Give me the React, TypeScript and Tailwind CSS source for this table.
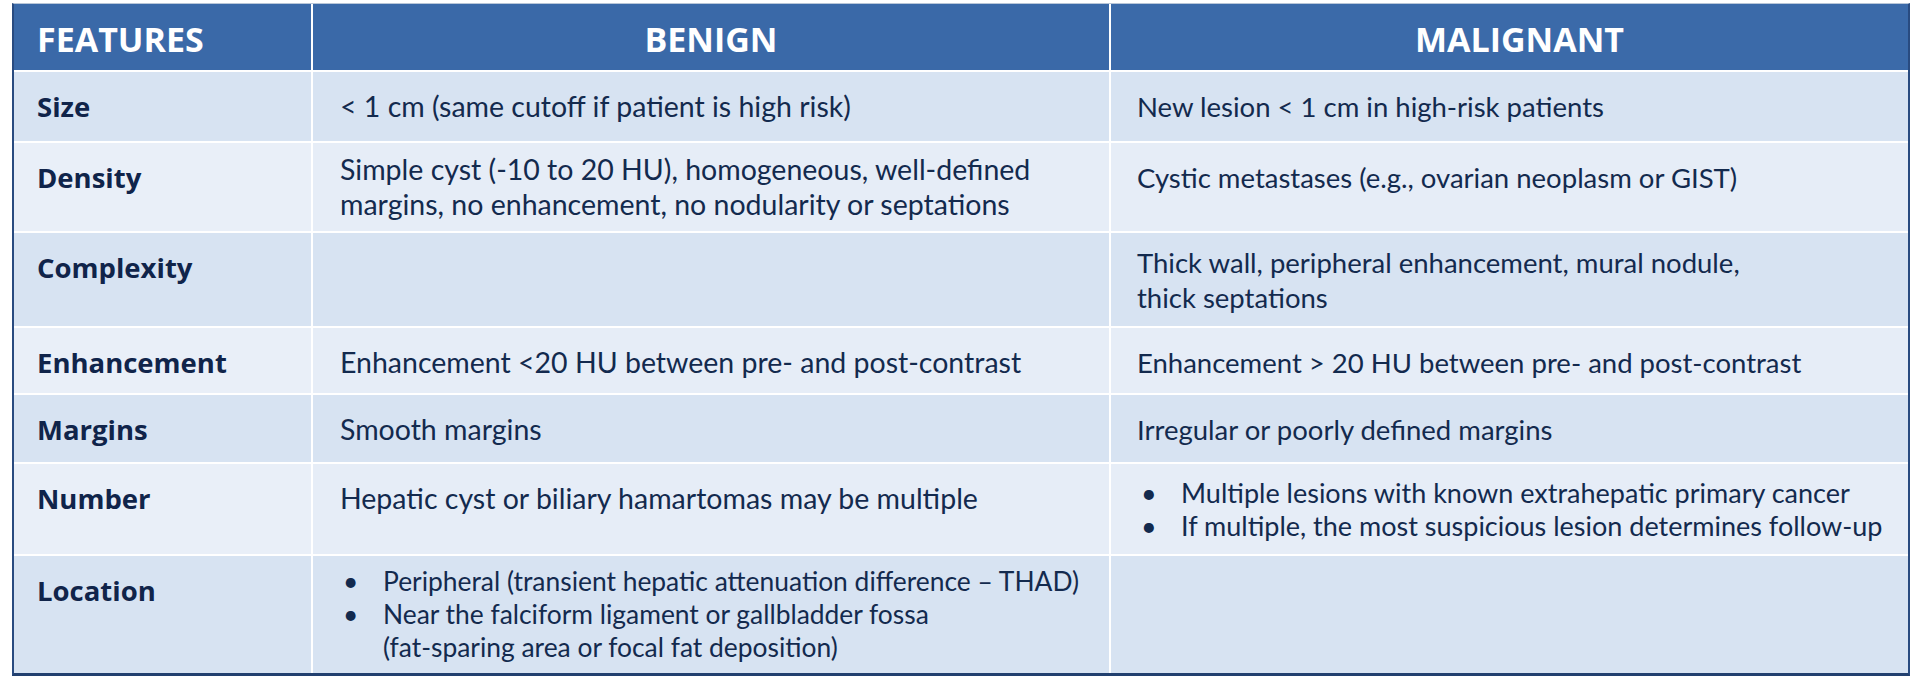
import React from "react";

type Cell = { text?: string[]; bullets?: string[][]; multi?: boolean };
type Row = { label: string; h: string; shade: "dark" | "light"; benign: Cell; malignant: Cell };

const rows: Row[] = [
  {
    label: "Size",
    h: "h-[69px]",
    shade: "dark",
    benign: { text: ["< 1 cm (same cutoff if patient is high risk)"] },
    malignant: { text: ["New lesion < 1 cm in high-risk patients"] },
  },
  {
    label: "Density",
    h: "h-[88px]",
    shade: "light",
    benign: {
      text: ["Simple cyst (-10 to 20 HU), homogeneous, well-defined", "margins, no enhancement, no nodularity or septations"],
      multi: true,
    },
    malignant: { text: ["Cystic metastases (e.g., ovarian neoplasm or GIST)"] },
  },
  {
    label: "Complexity",
    h: "h-[93px]",
    shade: "dark",
    benign: {},
    malignant: { text: ["Thick wall, peripheral enhancement, mural nodule,", "thick septations"], multi: true },
  },
  {
    label: "Enhancement",
    h: "h-[65px]",
    shade: "light",
    benign: { text: ["Enhancement <20 HU between pre- and post-contrast"] },
    malignant: { text: ["Enhancement > 20 HU between pre- and post-contrast"] },
  },
  {
    label: "Margins",
    h: "h-[67px]",
    shade: "dark",
    benign: { text: ["Smooth margins"] },
    malignant: { text: ["Irregular or poorly defined margins"] },
  },
  {
    label: "Number",
    h: "h-[90px]",
    shade: "light",
    benign: { text: ["Hepatic cyst or biliary hamartomas may be multiple"] },
    malignant: {
      bullets: [
        ["Multiple lesions with known extrahepatic primary cancer"],
        ["If multiple, the most suspicious lesion determines follow-up"],
      ],
      multi: true,
    },
  },
  {
    label: "Location",
    h: "h-[117px]",
    shade: "dark",
    benign: {
      bullets: [
        ["Peripheral (transient hepatic attenuation difference \u2013 THAD)"],
        ["Near the falciform ligament or gallbladder fossa", "(fat-sparing area or focal fat deposition)"],
      ],
      multi: true,
    },
    malignant: {},
  },
];

const shadeBg = { dark: "bg-[#d7e3f2]", light: "bg-[#e6edf7]" };

function Content({ cell, pad, size, bulletSize }: { cell: Cell; pad: string; size: string; bulletSize: string }) {
  if (cell.bullets) {
    return (
      <div className={`flex h-full flex-col justify-center pl-[30px] font-['Lato',sans-serif] leading-[33px] ${bulletSize}`}>
        {cell.bullets.map((b, i) => (
          <div key={i} className="flex">
            <span className="w-[40px] shrink-0">&bull;</span>
            <span>
              {b.map((l, j) => (
                <span key={j} className="block">
                  {l}
                </span>
              ))}
            </span>
          </div>
        ))}
      </div>
    );
  }
  if (!cell.text) return null;
  return (
    <div
      className={`flex h-full flex-col font-['Lato',sans-serif] leading-[35px] ${size} ${pad} ${
        cell.multi ? "justify-center" : "pt-[17px]"
      }`}
    >
      {cell.text.map((l, i) => (
        <span key={i}>{l}</span>
      ))}
    </div>
  );
}

export default function App() {
  return (
    <div className="min-h-[686px] bg-white pt-[3px]">
      <div className="ml-[12px] w-[1898px] border-x-2 border-t border-b-[3px] border-x-[#294b80] border-t-[#b8c6d8] border-b-[#22406f] bg-white">
        <div className="grid grid-cols-[297px_796px_797px] gap-[2px] text-[#132a4e]">
          <div className="flex h-[66px] items-center bg-[#3a69a8] pl-[23px] pt-1 font-['Open_Sans',sans-serif] text-[34px] font-bold text-white">
            FEATURES
          </div>
          <div className="flex h-[66px] items-center justify-center bg-[#3a69a8] pt-1 font-['Open_Sans',sans-serif] text-[34px] font-bold text-white">
            BENIGN
          </div>
          <div className="flex h-[66px] items-center justify-center bg-[#3b6aa9] pt-1 pl-[20px] font-['Open_Sans',sans-serif] text-[34px] font-bold text-white">
            MALIGNANT
          </div>
          {rows.map((r) => (
            <React.Fragment key={r.label}>
              <div
                className={`${r.h} ${r.shade === "light" ? "bg-[#e9eff8]" : shadeBg.dark} pl-[23px] pt-[16px] font-['Open_Sans',sans-serif] text-[27.5px] font-bold leading-[38px] text-[#10244a]`}
              >
                {r.label}
              </div>
              <div className={`${r.h} ${shadeBg[r.shade]}`}>
                <Content cell={r.benign} pad="pl-[27px]" size="text-[28.5px]" bulletSize="text-[26.4px]" />
              </div>
              <div className={`${r.h} ${shadeBg[r.shade]}`}>
                <Content cell={r.malignant} pad="pl-[26px]" size="text-[27.5px]" bulletSize="text-[27px]" />
              </div>
            </React.Fragment>
          ))}
        </div>
      </div>
    </div>
  );
}
